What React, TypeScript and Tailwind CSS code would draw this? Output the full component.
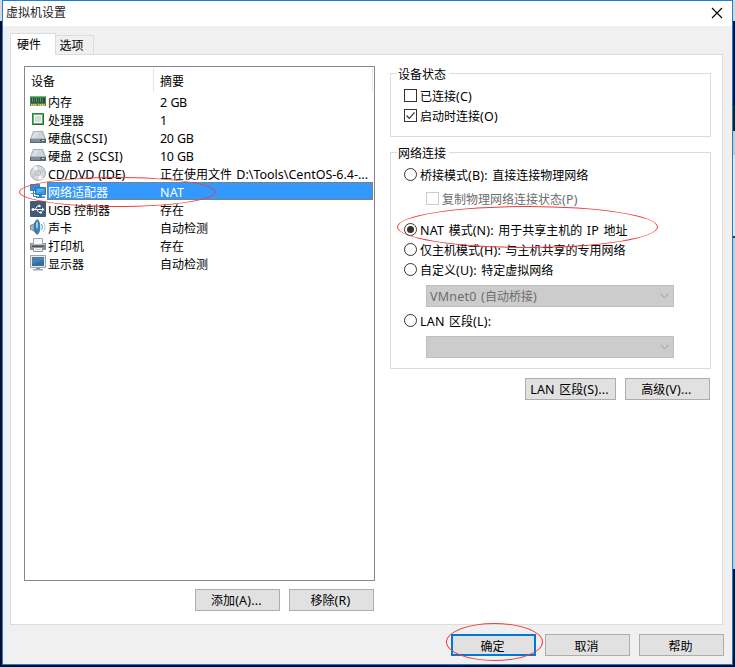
import React, { useState } from 'react';
import clsx from 'clsx';

type Device = {
  icon: string;
  name: string;
  summary: string;
  nameTracking?: string;
  tracking?: string;
};

const devices: Device[] = [
  { icon: 'memory', name: '内存', summary: '2 GB', tracking: 'tracking-[-0.5px]' },
  { icon: 'cpu', name: '处理器', summary: '1' },
  { icon: 'disk', name: '硬盘(SCSI)', summary: '20 GB', nameTracking: 'tracking-[0.35px]', tracking: 'tracking-[-0.5px]' },
  { icon: 'disk', name: '硬盘 2 (SCSI)', summary: '10 GB', tracking: 'tracking-[-0.5px]' },
  { icon: 'cd', name: 'CD/DVD (IDE)', summary: '正在使用文件 D:\\Tools\\CentOS-6.4-...', nameTracking: 'tracking-[-0.2px]', tracking: 'tracking-[0px]' },
  { icon: 'network', name: '网络适配器', summary: 'NAT' },
  { icon: 'usb', name: 'USB 控制器', summary: '存在', nameTracking: 'tracking-[-0.6px]' },
  { icon: 'sound', name: '声卡', summary: '自动检测' },
  { icon: 'printer', name: '打印机', summary: '存在' },
  { icon: 'display', name: '显示器', summary: '自动检测' },
];

// latin runs are slightly larger than the 12px CJK glyphs
function Label({ text, tracking = 'tracking-[0.2px]' }: { text: string; tracking?: string }) {
  return (
    <span className="whitespace-pre">
      {text.split(/([\x20-\x7e]+)/).map((part, i) =>
        i % 2 ? (
          <span key={i} className={clsx('text-[12.5px] [word-spacing:1px]', tracking)}>
            {part}
          </span>
        ) : (
          part
        )
      )}
    </span>
  );
}

function DeviceIcon({ type }: { type: string }) {
  return (
    <svg width="16" height="16" viewBox="0 0 16 16" className="shrink-0">
      {type === 'memory' && (
        <>
          <path d="M0 3h16v10H0z" fill="#2f8f45" />
          <path d="M0 3h16v1H0z" fill="#6fb97f" />
          <path d="M1 5h3v5H1zM5 5h3v5H5zM9 5h3v5H9zM13 5h2v5h-2z" fill="#3c4341" />
          <path d="M2 5h1v4H2zM6 5h1v4H6zM10 5h1v4h-1z" fill="#7a8682" />
          <path d="M1 12h6M8 12h7" stroke="#e9c56c" strokeWidth="2" strokeDasharray="1.5 .5" />
        </>
      )}
      {type === 'cpu' && (
        <>
          <rect x="2" y="2" width="12" height="12" fill="#2b8a43" />
          <rect x="3" y="3" width="10" height="10" fill="#5fb473" />
          <rect x="4" y="4" width="8" height="8" fill="#f6f8f6" />
          <rect x="5" y="5" width="6" height="6" fill="#d9dbda" />
          <path d="M13.5 3v10.5H3" fill="none" stroke="#1e6d31" />
        </>
      )}
      {type === 'disk' && (
        <>
          <path d="M3 2h10l3 8H0z" fill="#a9b2bc" />
          <path d="M4 3h8l2.3 6H1.7z" fill="#cdd3da" />
          <path d="M4 3h5L5 9H1.7z" fill="#dde1e6" />
          <path d="M0 9.5h16V14H0z" fill="#5e6874" />
          <path d="M1 10h9v3H1z" fill="#838d99" />
          <path d="M0 9h16v1H0z" fill="#b3bac2" />
          <path d="M12 11h2v1h-2z" fill="#bdf298" />
        </>
      )}
      {type === 'cd' && (
        <>
          <circle cx="8" cy="8" r="7.4" fill="#d8dadd" stroke="#a5a8ac" />
          <path d="M8 8 3 2.5A7 7 0 0 1 7 1zM8 8l5 5.5A7 7 0 0 1 9 15z" fill="#f7f7f7" />
          <path d="M8 8 1 9a7 7 0 0 0 2 4zM8 8l7-1a7 7 0 0 0-2-4z" fill="#c9ccd0" />
          <circle cx="8" cy="8" r="2.5" fill="#eef1f3" stroke="#aab1b8" />
          <circle cx="8" cy="8" r="1" fill="#fff" stroke="#8d969f" strokeWidth=".6" />
        </>
      )}
      {type === 'network' && (
        <>
          <path d="M.5 1.5h9v6h-9z" fill="#3191d8" stroke="#3b7db1" />
          <path d="M3.5 8v5.5H7" fill="none" stroke="#3f7ca8" />
          <path d="M1 10.5h4" stroke="#5b93ba" />
          <path d="M5.5 4.5h10v7h-10z" fill="#3598e6" stroke="#2777b8" />
          <path d="M7 6h7v1.5L7 10z" fill="#5ab0f0" />
          <path d="M9 12h3v1.5h3V15H6v-1.5h3z" fill="#3382bd" />
        </>
      )}
      {type === 'usb' && (
        <>
          <rect width="16" height="16" rx="1" fill="#425a74" />
          <path d="M2.5 8.5h10M5 8.5 7.5 5H9M6.5 8.5 9 11.5h2" fill="none" stroke="#fff" />
          <path d="m12 6.5 2.5 2-2.5 2z" fill="#fff" />
          <circle cx="3" cy="8.5" r="1.5" fill="#fff" />
          <circle cx="9.5" cy="5" r="1.2" fill="#fff" />
          <path d="M10 10.5h2v2h-2z" fill="#fff" />
        </>
      )}
      {type === 'sound' && (
        <>
          <path d="M0 6 3 5l4.5-4.5v15L3 12l-3-1.5z" fill="#7c93a8" />
          <path d="M1 7l2.5-1v5L1 10z" fill="#a5b6c5" />
          <ellipse cx="7.2" cy="8" rx="2.6" ry="7.2" fill="#2b88c6" stroke="#41627f" strokeWidth=".8" />
          <ellipse cx="7" cy="6" rx="1.1" ry="3.6" fill="#8dd0f2" />
          <path d="M11.5 5q2 3 0 6" fill="none" stroke="#4c9dca" />
          <path d="M13.3 3q3.4 5 0 10" fill="none" stroke="#9cc6de" />
        </>
      )}
      {type === 'printer' && (
        <>
          <path d="M3.5 1.5h9v6h-9z" fill="#f8f8f8" stroke="#a4a7ad" />
          <path d="M0 6h3v1h10V6h3v7H0z" fill="#8d9199" />
          <path d="M1 7h14v1H1z" fill="#b7bac0" />
          <path d="M2 8.5h12V10H2z" fill="#4e535e" />
          <path d="M3.5 10.5h9v4h-9z" fill="#f4f6f8" stroke="#8f949c" />
          <path d="M5 12.5h6" stroke="#c4c9ce" />
        </>
      )}
      {type === 'display' && (
        <>
          <path d="M.5.5h15v12H.5z" fill="#e6ebee" stroke="#96a5b0" />
          <path d="M2 2h12v9H2z" fill="#356f9f" />
          <path d="M2 2h12v3L2 9z" fill="#4a80af" />
          <path d="M6 13h4v1H6z" fill="#8796a2" />
          <path d="M3 14h10v1.5H3z" fill="#9baab4" />
        </>
      )}
    </svg>
  );
}

function Button({ text, className, onClick }: { text: string; className: string; onClick?: () => void }) {
  return (
    <button
      onClick={onClick}
      className={clsx('flex h-[22px] items-center justify-center bg-[#e1e1e1] pt-[3px] pr-[2px] leading-none', className)}
    >
      <Label text={text} />
    </button>
  );
}

function Check({ text, checked, disabled, onChange }: { text: string; checked?: boolean; disabled?: boolean; onChange?: () => void }) {
  return (
    <label className={clsx('flex h-5 items-center gap-[3px]', disabled && 'text-[#6d6d6d]')}>
      <input type="checkbox" className="sr-only" checked={!!checked} disabled={disabled} onChange={onChange ?? (() => {})} />
      <span className={clsx('size-[13px] shrink-0 border bg-white', disabled ? 'border-[#cccccc]' : 'border-[#333333]')}>
        {checked && (
          <svg width="11" height="11" viewBox="0 0 11 11">
            <path d="m1.5 5.5 2.8 2.8 5.2-6" fill="none" stroke="#333" strokeWidth="1.2" />
          </svg>
        )}
      </span>
      <span className="pt-[3px]">
        <Label text={text} />
      </span>
    </label>
  );
}

function Radio({ text, checked, onChange }: { text: string; checked: boolean; onChange: () => void }) {
  return (
    <label className="flex h-5 items-center gap-[3px]">
      <input type="radio" name="network" className="sr-only" checked={checked} onChange={onChange} />
      <span className="flex size-[13px] shrink-0 items-center justify-center rounded-full border border-[#333333] bg-white">
        {checked && <span className="size-[7px] rounded-full bg-[#333333]" />}
      </span>
      <span className="pt-[3px]">
        <Label text={text} />
      </span>
    </label>
  );
}

function Combo({ text }: { text: string }) {
  return (
    <div className="ml-[22px] flex h-[22px] w-[248px] items-center justify-between border border-[#bfbfbf] bg-[#cccccc] pr-1 pl-[3px] text-[#6d6d6d]">
      <span className="pt-[2px]">
        <Label text={text} />
      </span>
      <svg width="9" height="6" viewBox="0 0 9 6">
        <path d="m.5.8 4 4 4-4" fill="none" stroke="#9a9a9a" />
      </svg>
    </div>
  );
}

function Group({ title, className, children }: { title: string; className: string; children: React.ReactNode }) {
  return (
    <section className={clsx('w-[321px] border border-[#dcdcdc] pl-[13px]', className)}>
      <h2 className="-mt-[9px] -ml-[7px] flex h-[18px] w-[52px] items-center bg-white pt-[2px] pl-px">{title}</h2>
      {children}
    </section>
  );
}

// hand-drawn style red markers over the important options
function Marker({ className }: { className: string }) {
  return <div className={clsx('pointer-events-none absolute rounded-[50%] border border-[#f23b3b]', className)} />;
}

export default function App() {
  const [selected, setSelected] = useState(5);
  const [mode, setMode] = useState('nat');
  const [connected, setConnected] = useState(false);
  const [autoConnect, setAutoConnect] = useState(true);

  return (
    <div className="relative flex h-[667px] w-[735px] overflow-hidden bg-[#030d2c] font-['Noto_Sans','Noto_Sans_CJK_SC',sans-serif] text-[12px] leading-[16px] text-black">
      <div className="h-[21px] w-[2px] bg-[#d9d9d9]" />

      <div className="flex h-[665px] w-[731px] flex-col border border-[#1b7fd3] bg-[#f0f0f0]">
        <header className="flex h-[25px] shrink-0 items-center justify-between bg-white pr-[9px] pl-[3px]">
          <h1 className="pb-px text-[#222]">虚拟机设置</h1>
          <button aria-label="关闭">
            <svg width="12" height="12" viewBox="0 0 12 12" className="mb-px">
              <path d="m1 1 10 10M11 1 1 11" stroke="#000" strokeWidth="1.1" />
            </svg>
          </button>
        </header>

        <nav className="flex h-[28px] shrink-0 items-end pl-[7px]">
          <button className="z-10 -mb-px h-[22px] w-[46px] border border-b-0 border-[#dcdcdc] bg-white pr-[8px]">硬件</button>
          <button className="-ml-px h-[19px] w-[39px] border border-b-0 border-[#dcdcdc] bg-[#f0f0f0] pt-[2px] pr-[6px]">选项</button>
        </nav>

        <main className="ml-[7px] flex h-[571px] w-[713px] shrink-0 border border-[#dcdcdc] bg-white pt-[11px] pl-[13px]">
          <div>
            <div className="flex h-[515px] w-[351px] flex-col border border-[#828790]">
              <div className="flex h-[25px] pt-px">
                <div className="flex h-6 w-[129px] items-center border-r border-[#e5e5e5] pt-[3px] pl-[6px]">设备</div>
                <div className="flex h-6 w-[219px] items-center border-r border-[#e5e5e5] pt-[3px] pl-[6px]">摘要</div>
              </div>
              <ul>
                {devices.map((d, i) => (
                  <li key={i} onClick={() => setSelected(i)} className="flex h-[18px] items-center pl-[5px]">
                    <DeviceIcon type={d.icon} />
                    <div
                      className={clsx(
                        'ml-px flex h-[18px] w-[326px] items-center border border-dotted pt-[3px]',
                        i === selected ? 'border-[#cc6600] bg-[#3399ff] text-white' : 'border-transparent'
                      )}
                    >
                      <span className="w-[112px] shrink-0">
                        <Label text={d.name} tracking={d.nameTracking} />
                      </span>
                      <Label text={d.summary} tracking={d.tracking} />
                    </div>
                  </li>
                ))}
              </ul>
            </div>
            <div className="mt-2 flex justify-end gap-[9px] pr-px">
              <Button text="添加(A)..." className="w-[85px] border border-[#adadad]" />
              <Button text="移除(R)" className="w-[85px] border border-[#adadad]" />
            </div>
          </div>

          <div className="ml-[15px] pt-[7px]">
            <Group title="设备状态" className="h-[64px]">
              <div className="pt-[2px]">
                <Check text="已连接(C)" checked={connected} onChange={() => setConnected(!connected)} />
                <Check text="启动时连接(O)" checked={autoConnect} onChange={() => setAutoConnect(!autoConnect)} />
              </div>
            </Group>
            <Group title="网络连接" className="mt-[15px] h-[217px]">
              <div className="pt-[2px]">
                <Radio text="桥接模式(B): 直接连接物理网络" checked={mode === 'bridge'} onChange={() => setMode('bridge')} />
                <div className="mt-1 mb-[11px] pl-[22px]">
                  <Check text="复制物理网络连接状态(P)" disabled />
                </div>
                <Radio text="NAT 模式(N): 用于共享主机的 IP 地址" checked={mode === 'nat'} onChange={() => setMode('nat')} />
                <Radio text="仅主机模式(H): 与主机共享的专用网络" checked={mode === 'host'} onChange={() => setMode('host')} />
                <Radio text="自定义(U): 特定虚拟网络" checked={mode === 'custom'} onChange={() => setMode('custom')} />
                <div className="mt-[6px] mb-[3px]">
                  <Combo text="VMnet0 (自动桥接)" />
                </div>
                <Radio text="LAN 区段(L):" checked={mode === 'lan'} onChange={() => setMode('lan')} />
                <div className="mt-[6px]">
                  <Combo text="" />
                </div>
              </div>
            </Group>
            <div className="mt-[9px] flex justify-end gap-[9px] pr-px">
              <Button text="LAN 区段(S)..." className="w-[91px] border border-[#adadad]" />
              <Button text="高级(V)..." className="w-[85px] border border-[#adadad]" />
            </div>
          </div>
        </main>

        <footer className="mt-[9px] flex justify-end gap-[9px] pr-2">
          <Button text="确定" className="w-[85px] border-2 border-[#0078d7]" />
          <Button text="取消" className="w-[85px] border border-[#adadad]" />
          <Button text="帮助" className="w-[85px] border border-[#adadad]" />
        </footer>
      </div>

      {/* desktop showing past the right edge of the window */}
      <div className="w-[2px]">
        <div className="h-[21px] bg-[#d5d5d5]" />
        <div className="h-[84px] bg-[#030d35]" />
        <div className="h-[26px] bg-[#1d1d1d]" />
        <div className="h-[24px] bg-[#c8c8c8]" />
        <div className="h-[81px] bg-[#e5e5e5]" />
        <div className="h-[2px] bg-[#333333]" />
        <div className="h-[331px] bg-[#c3cbd5]" />
      </div>

      <Marker className="top-[177px] left-[19px] h-[30px] w-[197px]" />
      <Marker className="top-[206px] left-[397px] h-[42px] w-[261px]" />
      <Marker className="top-[623px] left-[446px] h-[38px] w-[97px]" />
    </div>
  );
}
